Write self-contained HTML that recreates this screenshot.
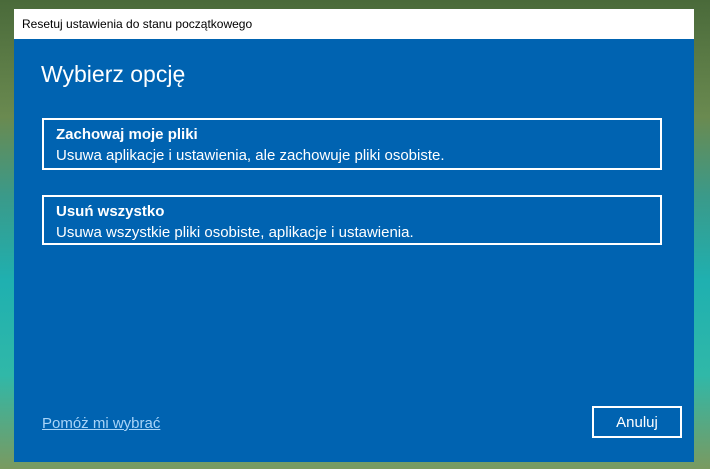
<!DOCTYPE html>
<html><head><style>
body{margin:0;width:710px;height:469px;overflow:hidden;position:relative;font-family:"Liberation Sans",sans-serif;
background:linear-gradient(180deg,#4a6a3a 0%,#6a8a50 25%,#3a9a8a 42%,#1fb0b0 60%,#30b8a8 80%,#7a9a60 100%);}
.win{position:absolute;left:14px;top:9px;width:680px;height:453px;background:#0063b1;}
.tb{position:absolute;left:0;top:0;width:680px;height:30px;background:#fff;color:#000;font-size:12px;line-height:30px;padding-left:8px;box-sizing:border-box}
h1{position:absolute;left:27px;top:52px;margin:0;font-weight:normal;color:#fff;font-size:23px}
.box{position:absolute;left:28px;width:620px;border:2px solid #fff;box-sizing:border-box;color:#fff;padding:5px 0 0 12px}
.box b{display:block;font-size:15px;line-height:20px}
.box span{font-size:15px;line-height:21px}
.link{position:absolute;left:28px;top:406px;color:#a8d4f8;font-size:15px;text-decoration:underline}
.btn{position:absolute;left:578px;top:397px;width:90px;height:32px;border:2px solid #fff;box-sizing:border-box;color:#fff;font-size:15px;text-align:center;line-height:29px}
</style></head><body>
<div class="win">
<div class="tb">Resetuj ustawienia do stanu początkowego</div>
<h1>Wybierz opcję</h1>
<div class="box" style="top:109px;height:52px"><b>Zachowaj moje pliki</b><span>Usuwa aplikacje i ustawienia, ale zachowuje pliki osobiste.</span></div>
<div class="box" style="top:186px;height:50px"><b>Usuń wszystko</b><span>Usuwa wszystkie pliki osobiste, aplikacje i ustawienia.</span></div>
<div class="link">Pomóż mi wybrać</div>
<div class="btn">Anuluj</div>
</div>
</body></html>
